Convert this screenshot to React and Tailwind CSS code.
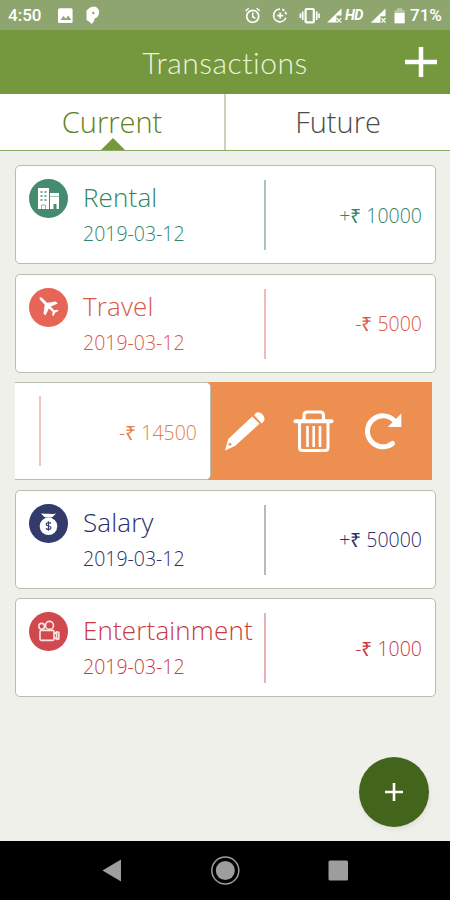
import React, { useState } from 'react';

const transactions = [
    { id: 1, name: 'Rental', date: '2019-03-12', amount: '+₹ 10000', icon: 'rental', text: 'text-[#2f8565]', fill: 'bg-[#448b70]', line: 'bg-[#a9c4b9]' },
    { id: 2, name: 'Travel', date: '2019-03-12', amount: '-₹ 5000', icon: 'travel', text: 'text-[#dc5748]', fill: 'bg-[#e66557]', line: 'bg-[#f0bab5]' },
    { id: 3, amount: '-₹ 14500', swiped: true },
    { id: 4, name: 'Salary', date: '2019-03-12', amount: '+₹ 50000', icon: 'salary', text: 'text-[#2b2d68]', fill: 'bg-[#323b6c]', line: 'bg-[#b7b9bf]' },
    { id: 5, name: 'Entertainment', date: '2019-03-12', amount: '-₹ 1000', icon: 'fun', text: 'text-[#c93a40]', fill: 'bg-[#d0494f]', line: 'bg-[#e5b1b4]' },
];

const icons = {
    rental: (
        <svg viewBox="0 0 39 39" className="h-full w-full">
            <path d="M9 9h11v21H9zM21 14h9v16h-2.5v-5h-3v5H21z" fill="#fff" />
            <path d="M11.5 13h2m2 0h2m-6 4h2m2 0h2m-6 4h2m2 0h2" stroke="#448b70" strokeWidth="1.6" />
            <path d="M21 17.5h9" stroke="#448b70" strokeOpacity=".5" />
            <path d="M12.5 30v-4h4v4" fill="none" stroke="#448b70" strokeOpacity=".6" strokeWidth="1" />
        </svg>
    ),
    travel: (
        <svg viewBox="0 0 39 39" className="h-full w-full" fill="#fff">
            <path d="M10.6 9.4c.8-.4 2.4.4 3.4 1.4l4.1 4 8.7-1.3 2 2-7.1 3 3.5 3.8 3.2-.6 1.2 1.2-3.4 1.7-1.8 3.6-1.2-1.2.4-3.2-3.7-3.4-3.4 7-2-2 1.2-8.6-3.9-4.2c-.9-1-1.6-2.5-1.2-3.2z" />
        </svg>
    ),
    salary: (
        <svg viewBox="0 0 39 39" className="h-full w-full">
            <path d="M12 9.8c2.3-.8 4 .3 7 0 3-.3 5 .8 8-.2l-3.5 3.4h-8zM16 13.5h7v1.5h-7z" fill="#fff" />
            <circle cx="19.5" cy="22.2" r="8.8" fill="#fff" />
            <path d="M22 19.5c-.7-1-4.8-1.4-4.8.9 0 2.2 4.8 1 4.8 3.3 0 2.2-4.2 2-5 .7M19.5 17.3v9.5" fill="none" stroke="#323b6c" strokeWidth="1.2" />
        </svg>
    ),
    fun: (
        <svg viewBox="0 0 39 39" className="h-full w-full" fill="none" stroke="#ffe5e2" strokeWidth="1.6">
            <circle cx="12.7" cy="14.3" r="2.9" />
            <circle cx="20.5" cy="13.4" r="4" />
            <rect x="11" y="18.4" width="14" height="10" rx="1.3" />
            <path d="M25 22l2.8-2.2 2 .5v6.5l-2 .6-2.8-2.3M27.6 20v7.2" />
        </svg>
    ),
};

const StatusBar = () => (
    <div className="flex h-[30px] items-center bg-[#8fa570] font-['Roboto',sans-serif] text-white">
        <span className="ml-[8px] mt-[2px] w-[36px] text-[17px] font-medium">4:50</span>
        <svg className="ml-[12px] h-[30px] w-[46px]" viewBox="0 0 46 30">
            <rect x="2" y="8.3" width="14.6" height="14.6" rx="1.5" fill="#fff" />
            <path d="M4.5 20l3-4 2.4 2.7 2.3-3.2 3 4.5z" fill="#8fa570" />
            <path d="M34 7.500L37.500 6.500c4.500.5 6.200 3.500 5.500 7-.7 3.500-2.800 4.700-4.500 5l-.5 3-2.700 2.500-1.500-2-3.300-2V10.500z" fill="#fff" />
            <circle cx="37.3" cy="13" r="1.2" fill="#8fa570" />
        </svg>
        <svg className="ml-[141px] h-[30px] w-[102px]" viewBox="243 0 102 30" fill="none" stroke="#fff" strokeWidth="1.7">
            <circle cx="252.7" cy="16.3" r="6" />
            <path d="M252.7 12.5v4.2l2.7 1.6M245.5 11l3.3-2.8M259.9 11l-3.3-2.8" strokeWidth="1.5" />
            <path d="M280 9.200a6.300 6.300 0 1 0 5.800 8.600" />
            <path d="M282.200 9.400a6.300 6.300 0 0 1 4 6" strokeDasharray="2.6 1.4" />
            <path d="M280.2 12.600v6M277.200 15.600h6" />
            <rect x="305.6" y="9" width="8.2" height="13.4" rx="1" strokeWidth="2.2" />
            <path d="M302.7 11.500v8.500M300.400 13.500v4.500M316.700 11.500v8.500M319 13.500v4.500" strokeWidth="1.7" />
            <path d="M341.5 8.500v7h-5v7h-9.500z" fill="#fff" stroke="none" />
            <path d="M336.8 18.200l4.400 4.400m0-4.400l-4.400 4.400" strokeWidth="1.2" />
        </svg>
        <span className="mt-[3px] w-[20px] text-[14.5px] font-bold italic leading-none tracking-[-0.7px]">HD</span>
        <svg className="ml-[4px] h-[30px] w-[40px]" viewBox="369 0 40 30">
            <path d="M385.5 8.500v7.700h-5v6.600h-9.700z" fill="#fff" />
            <path d="M381.5 18.200l4 4.400m0-4.400l-4 4.400" stroke="#fff" strokeWidth="1.2" />
            <path d="M397 8.300h5v2h2.600v13h-10v-13h2.400z" fill="#fff" fillOpacity=".4" />
            <path d="M394.6 13h10v10.300h-10z" fill="#fff" />
        </svg>
        <span className="ml-[1px] mt-[2px] text-[17px] font-medium">71%</span>
    </div>
);

const SwipedRow = ({ amount }) => (
    <div className="flex h-[98px] w-[417px] overflow-hidden bg-[#ed8f50]">
        <div className="flex w-[196px] items-center rounded-r-[5px] border-y border-r border-[#b9bdac] bg-white pl-[24px] pr-[13px]">
            <div className="h-[70px] w-[2px] bg-[#f3c7b6]" />
            <span className="ml-auto pt-[2px] text-[19.5px] font-light text-[#e57f48]">{amount}</span>
        </div>
        <svg className="h-[98px] w-[220px]" viewBox="211 382 220 98" fill="#fff">
            <path d="M225 450.5l3.200-11.500 24-22.500 7.300 7.300-24.500 22.200zM254 415l2-2c3.500-3 10.500 3.500 8 8l-2.300 2.600z" />
            <circle cx="230" cy="444.3" r="1.4" fill="#ed8f50" />
            <g fill="none" stroke="#fff">
                <path d="M304 420.5v-5q0-3.500 3.500-3.500h12.500q3.500 0 3.500 3.500v5" strokeWidth="3.2" />
                <path d="M295.5 421.3h36" strokeWidth="4" strokeLinecap="round" />
                <path d="M299.5 422v25.500q0 3 3 3h22.500q3 0 3-3V422" strokeWidth="3" />
                <path d="M307.5 426v21M313.700 426v21M320 426v21" strokeWidth="2.6" />
                <path d="M392.5 443.500a15.500 15.500 0 1 1 2.500-22" strokeWidth="5" strokeLinecap="round" />
            </g>
            <path d="M401.3 413.500v13.500h-13.500z" />
        </svg>
    </div>
);

const TransactionCard = ({ item }) => (
    <div className={`flex h-[99px] rounded-[5px] border border-[#b9bdac] bg-white px-[13px] ${item.text}`}>
        <div className={`mt-[13px] h-[39px] w-[39px] shrink-0 rounded-full ${item.fill}`}>{icons[item.icon]}</div>
        <div className="ml-[15px] w-[181px] shrink-0 whitespace-nowrap pt-[13px]">
            <div className="text-[26px] font-light leading-[36px] tracking-[0.15px]">{item.name}</div>
            <div className="text-[19.5px] font-light leading-[38px]">{item.date}</div>
        </div>
        <div className={`mt-[14px] h-[70px] w-[2px] shrink-0 ${item.line}`} />
        <span className="ml-auto self-center whitespace-nowrap pt-[1px] text-[19.5px] font-light">{item.amount}</span>
    </div>
);

export default function App() {
    const [tab, setTab] = useState('current');

    return (
        <div className="flex h-[900px] w-[450px] flex-col overflow-hidden bg-[#eff0e9] font-['Open_Sans',sans-serif]">
            <StatusBar />
            <header className="grid h-[64px] shrink-0 grid-cols-[1fr_auto_1fr] items-center bg-[#75983e] text-white">
                <h1 className="col-start-2 font-['Lato',sans-serif] text-[30px] font-light tracking-[0.5px] text-[#edf3df]">Transactions</h1>
                <button className="mr-[13px] justify-self-end">
                    <svg width="32" height="32" viewBox="0 0 32 32" stroke="#fff" strokeWidth="4.5">
                        <path d="M16 1v30M0 16h32" />
                    </svg>
                </button>
            </header>
            <nav className="flex h-[57px] shrink-0 border-b border-[#8caa68] bg-white text-[29px] font-light">
                <button
                    onClick={() => setTab('current')}
                    className="relative flex w-[226px] items-center justify-center border-r-2 border-[#c9d0bd] text-[#5e7f22]"
                >
                    Current
                    {tab === 'current' && (
                        <svg className="absolute bottom-0 left-[101px]" width="24" height="12" viewBox="0 0 24 12">
                            <path d="M0 12L12 0l12 12z" fill="#75983e" />
                        </svg>
                    )}
                </button>
                <button onClick={() => setTab('future')} className="flex flex-1 items-center justify-center text-[#4c4c4c]">
                    Future
                </button>
            </nav>
            <main className="flex flex-1 flex-col pl-[15px] pr-[14px] pt-[14.2px]">
                <div className="flex flex-col gap-[9.5px]">
                    {transactions.map(item => (
                        item.swiped
                            ? <SwipedRow key={item.id} amount={item.amount} />
                            : <TransactionCard key={item.id} item={item} />
                    ))}
                </div>
                <button className="mb-[14px] mr-[7px] mt-auto flex h-[70px] w-[70px] items-center justify-center self-end rounded-full bg-[#43641b] shadow-[1px_3px_5px_rgba(0,0,0,0.06)]">
                    <svg width="18" height="18" viewBox="0 0 18 18" stroke="#fff" strokeWidth="2.6">
                        <path d="M9 0v18M0 9h18" />
                    </svg>
                </button>
            </main>
            <footer className="flex h-[59px] shrink-0 justify-center bg-black">
                <svg width="450" height="59" viewBox="0 841 450 59" fill="#9d9d9d">
                    <path d="M102.5 870.500l18.500-11v22z" />
                    <circle cx="225.3" cy="870.5" r="9.5" />
                    <circle cx="225.3" cy="870.5" r="13.5" fill="none" stroke="#9d9d9d" strokeWidth="1.5" />
                    <rect x="328.5" y="860.5" width="19.5" height="20" rx="1.5" />
                </svg>
            </footer>
        </div>
    );
}
